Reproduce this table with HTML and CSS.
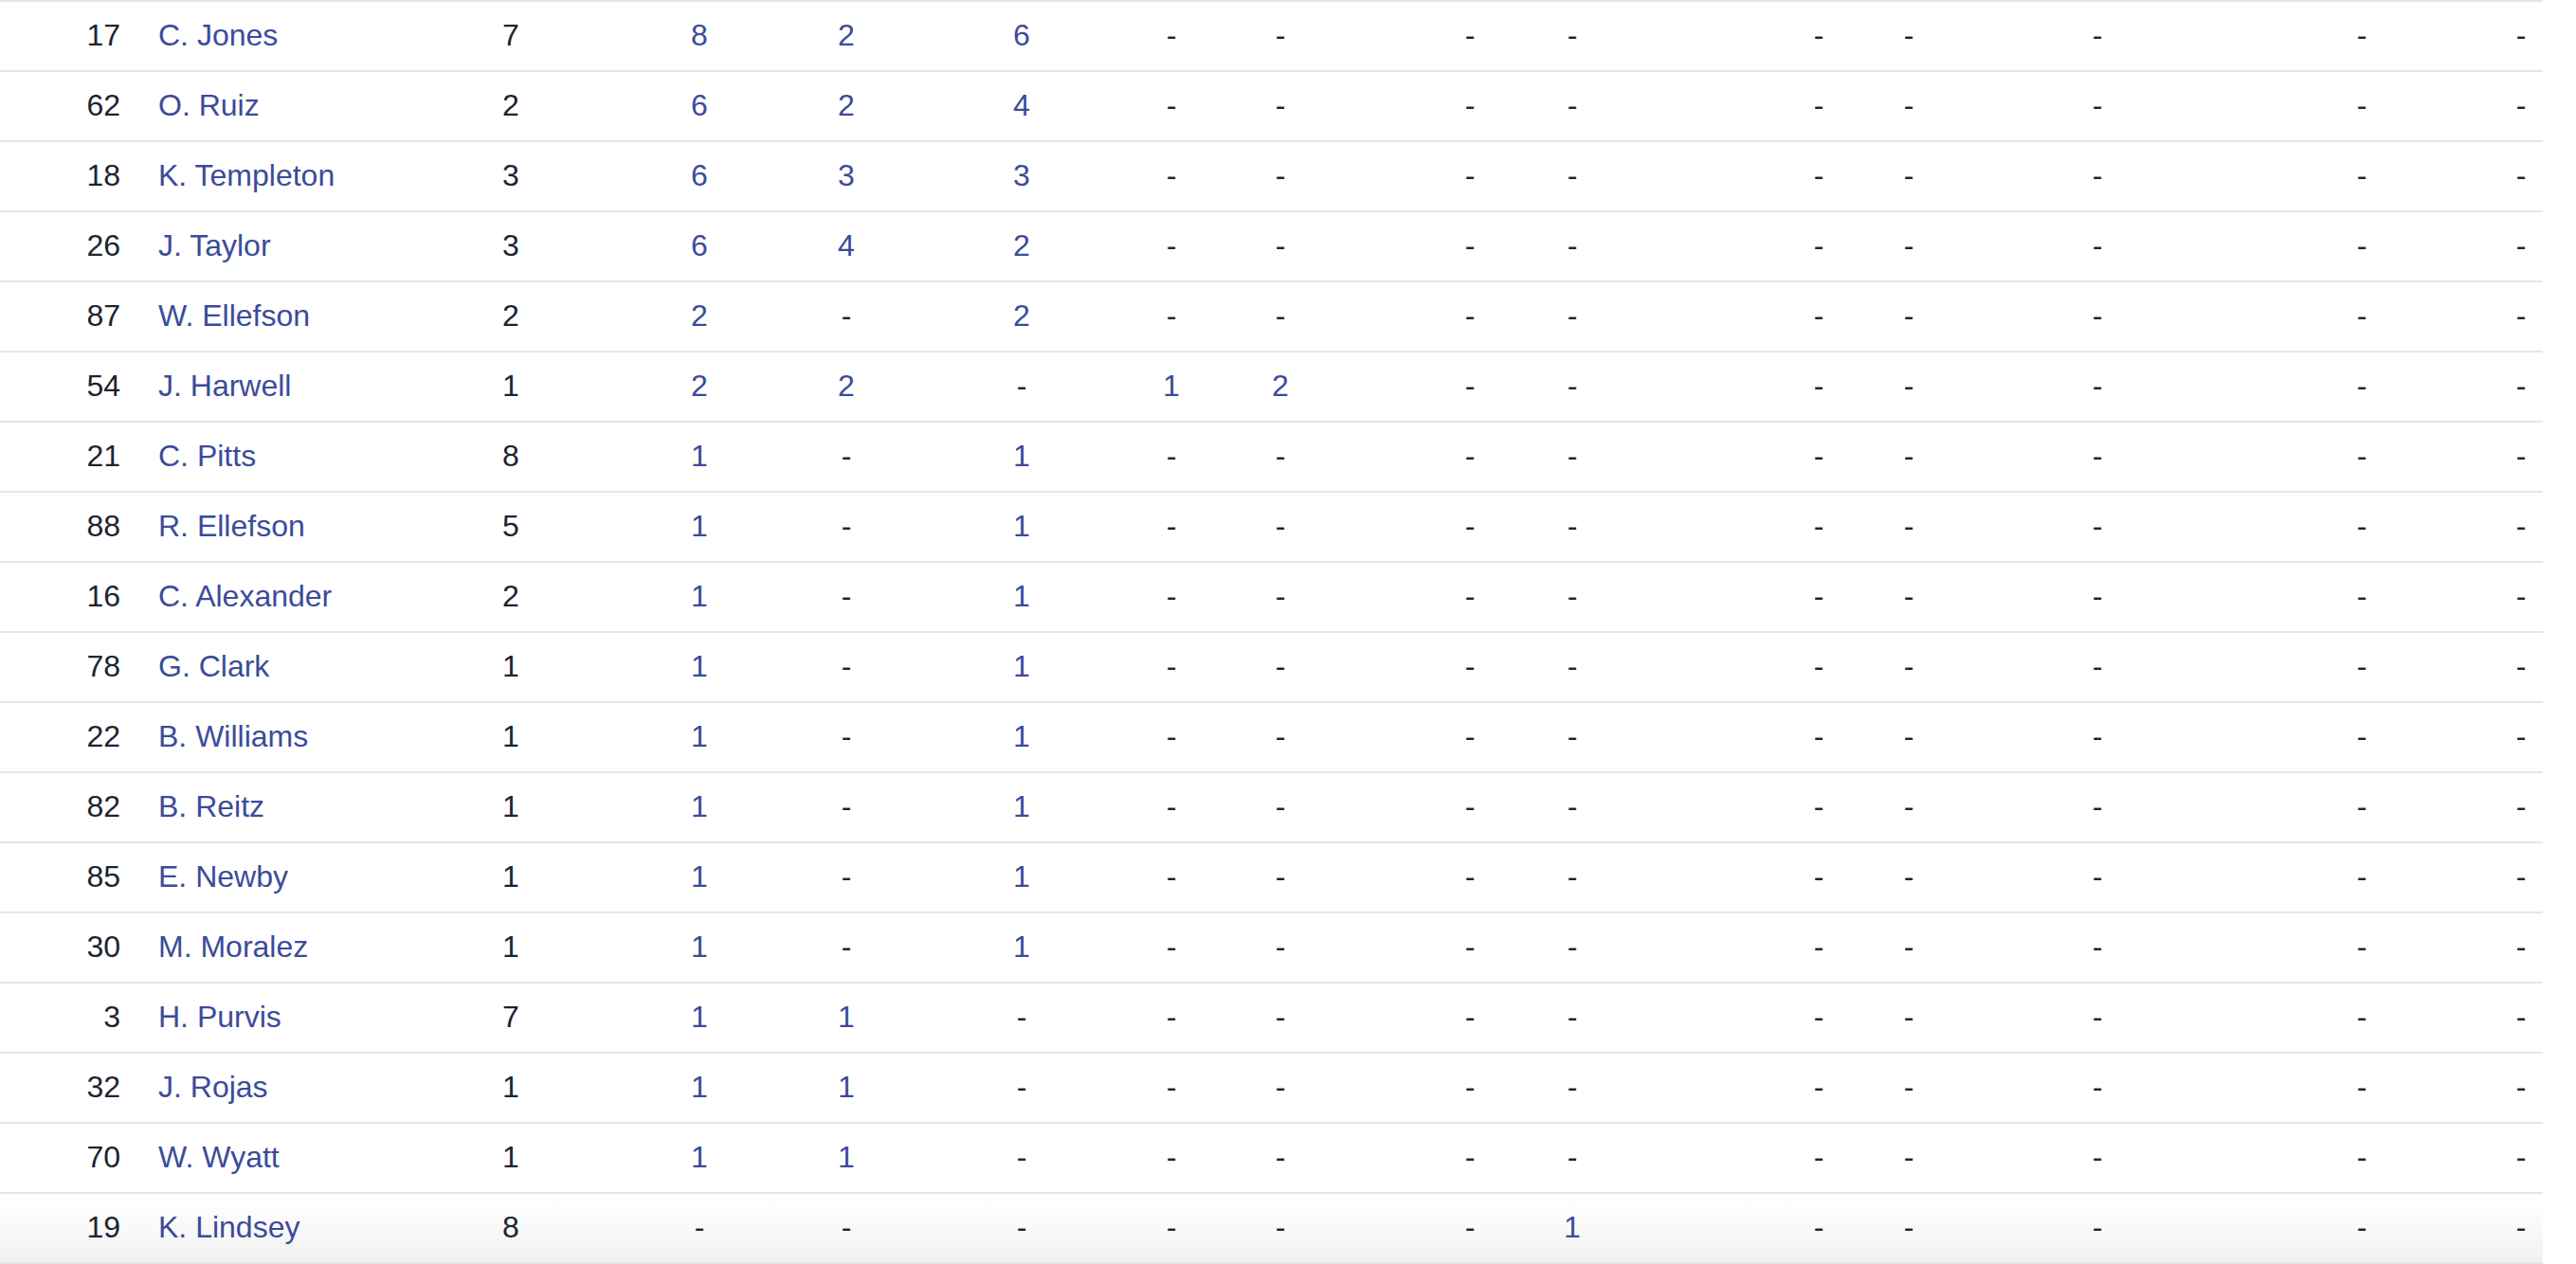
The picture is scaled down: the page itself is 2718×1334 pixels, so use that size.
FILE: index.html
```html
<!DOCTYPE html>
<html>
<head>
<meta charset="utf-8">
<link rel="stylesheet" href="styles.css">
</head>
<body>
<div class="table">
  <div class="row"><span class="num">17</span><a class="name">C. Jones</a><span class="v">7</span><a class="v lk">8</a><a class="v lk">2</a><a class="v lk">6</a><span class="v">-</span><span class="v">-</span><span class="v">-</span><span class="v">-</span><span class="v">-</span><span class="v">-</span><span class="v">-</span><span class="v">-</span><span class="v">-</span></div>
  <div class="row"><span class="num">62</span><a class="name">O. Ruiz</a><span class="v">2</span><a class="v lk">6</a><a class="v lk">2</a><a class="v lk">4</a><span class="v">-</span><span class="v">-</span><span class="v">-</span><span class="v">-</span><span class="v">-</span><span class="v">-</span><span class="v">-</span><span class="v">-</span><span class="v">-</span></div>
  <div class="row"><span class="num">18</span><a class="name">K. Templeton</a><span class="v">3</span><a class="v lk">6</a><a class="v lk">3</a><a class="v lk">3</a><span class="v">-</span><span class="v">-</span><span class="v">-</span><span class="v">-</span><span class="v">-</span><span class="v">-</span><span class="v">-</span><span class="v">-</span><span class="v">-</span></div>
  <div class="row"><span class="num">26</span><a class="name">J. Taylor</a><span class="v">3</span><a class="v lk">6</a><a class="v lk">4</a><a class="v lk">2</a><span class="v">-</span><span class="v">-</span><span class="v">-</span><span class="v">-</span><span class="v">-</span><span class="v">-</span><span class="v">-</span><span class="v">-</span><span class="v">-</span></div>
  <div class="row"><span class="num">87</span><a class="name">W. Ellefson</a><span class="v">2</span><a class="v lk">2</a><span class="v">-</span><a class="v lk">2</a><span class="v">-</span><span class="v">-</span><span class="v">-</span><span class="v">-</span><span class="v">-</span><span class="v">-</span><span class="v">-</span><span class="v">-</span><span class="v">-</span></div>
  <div class="row"><span class="num">54</span><a class="name">J. Harwell</a><span class="v">1</span><a class="v lk">2</a><a class="v lk">2</a><span class="v">-</span><a class="v lk">1</a><a class="v lk">2</a><span class="v">-</span><span class="v">-</span><span class="v">-</span><span class="v">-</span><span class="v">-</span><span class="v">-</span><span class="v">-</span></div>
  <div class="row"><span class="num">21</span><a class="name">C. Pitts</a><span class="v">8</span><a class="v lk">1</a><span class="v">-</span><a class="v lk">1</a><span class="v">-</span><span class="v">-</span><span class="v">-</span><span class="v">-</span><span class="v">-</span><span class="v">-</span><span class="v">-</span><span class="v">-</span><span class="v">-</span></div>
  <div class="row"><span class="num">88</span><a class="name">R. Ellefson</a><span class="v">5</span><a class="v lk">1</a><span class="v">-</span><a class="v lk">1</a><span class="v">-</span><span class="v">-</span><span class="v">-</span><span class="v">-</span><span class="v">-</span><span class="v">-</span><span class="v">-</span><span class="v">-</span><span class="v">-</span></div>
  <div class="row"><span class="num">16</span><a class="name">C. Alexander</a><span class="v">2</span><a class="v lk">1</a><span class="v">-</span><a class="v lk">1</a><span class="v">-</span><span class="v">-</span><span class="v">-</span><span class="v">-</span><span class="v">-</span><span class="v">-</span><span class="v">-</span><span class="v">-</span><span class="v">-</span></div>
  <div class="row"><span class="num">78</span><a class="name">G. Clark</a><span class="v">1</span><a class="v lk">1</a><span class="v">-</span><a class="v lk">1</a><span class="v">-</span><span class="v">-</span><span class="v">-</span><span class="v">-</span><span class="v">-</span><span class="v">-</span><span class="v">-</span><span class="v">-</span><span class="v">-</span></div>
  <div class="row"><span class="num">22</span><a class="name">B. Williams</a><span class="v">1</span><a class="v lk">1</a><span class="v">-</span><a class="v lk">1</a><span class="v">-</span><span class="v">-</span><span class="v">-</span><span class="v">-</span><span class="v">-</span><span class="v">-</span><span class="v">-</span><span class="v">-</span><span class="v">-</span></div>
  <div class="row"><span class="num">82</span><a class="name">B. Reitz</a><span class="v">1</span><a class="v lk">1</a><span class="v">-</span><a class="v lk">1</a><span class="v">-</span><span class="v">-</span><span class="v">-</span><span class="v">-</span><span class="v">-</span><span class="v">-</span><span class="v">-</span><span class="v">-</span><span class="v">-</span></div>
  <div class="row"><span class="num">85</span><a class="name">E. Newby</a><span class="v">1</span><a class="v lk">1</a><span class="v">-</span><a class="v lk">1</a><span class="v">-</span><span class="v">-</span><span class="v">-</span><span class="v">-</span><span class="v">-</span><span class="v">-</span><span class="v">-</span><span class="v">-</span><span class="v">-</span></div>
  <div class="row"><span class="num">30</span><a class="name">M. Moralez</a><span class="v">1</span><a class="v lk">1</a><span class="v">-</span><a class="v lk">1</a><span class="v">-</span><span class="v">-</span><span class="v">-</span><span class="v">-</span><span class="v">-</span><span class="v">-</span><span class="v">-</span><span class="v">-</span><span class="v">-</span></div>
  <div class="row"><span class="num">3</span><a class="name">H. Purvis</a><span class="v">7</span><a class="v lk">1</a><a class="v lk">1</a><span class="v">-</span><span class="v">-</span><span class="v">-</span><span class="v">-</span><span class="v">-</span><span class="v">-</span><span class="v">-</span><span class="v">-</span><span class="v">-</span><span class="v">-</span></div>
  <div class="row"><span class="num">32</span><a class="name">J. Rojas</a><span class="v">1</span><a class="v lk">1</a><a class="v lk">1</a><span class="v">-</span><span class="v">-</span><span class="v">-</span><span class="v">-</span><span class="v">-</span><span class="v">-</span><span class="v">-</span><span class="v">-</span><span class="v">-</span><span class="v">-</span></div>
  <div class="row"><span class="num">70</span><a class="name">W. Wyatt</a><span class="v">1</span><a class="v lk">1</a><a class="v lk">1</a><span class="v">-</span><span class="v">-</span><span class="v">-</span><span class="v">-</span><span class="v">-</span><span class="v">-</span><span class="v">-</span><span class="v">-</span><span class="v">-</span><span class="v">-</span></div>
  <div class="row last"><span class="num">19</span><a class="name">K. Lindsey</a><span class="v">8</span><span class="v">-</span><span class="v">-</span><span class="v">-</span><span class="v">-</span><span class="v">-</span><span class="v">-</span><a class="v lk">1</a><span class="v">-</span><span class="v">-</span><span class="v">-</span><span class="v">-</span><span class="v">-</span></div>
</div>
</body>
</html>
```
FILE: styles.css
```css
html, body {
  margin: 0;
  padding: 0;
  background: #ffffff;
}

body {
  font-family: "Liberation Sans", Arial, Helvetica, sans-serif;
  font-size: 32px;
  color: #1c2431;
  overflow: hidden;
}

.table {
  width: 2683px;
  border-bottom: 2px solid #e6e6e6;
}

.row {
  display: grid;
  grid-template-columns: 140px 387px 199px 155px 185px 158px 115px 200px 108px 260px 95px 199px 279px 168px 35px;
  align-items: center;
  box-sizing: content-box;
  height: 71px;
  padding-bottom: 1px;
  border-top: 2px solid #e6e6e6;
}

.row.last {
  background: linear-gradient(#ffffff 10%, #f1f1f1);
}

.num {
  text-align: right;
  padding-right: 13px;
}

.name {
  padding-left: 27px;
  color: #3b4b9b;
  text-decoration: none;
}

.v {
  justify-self: start;
  width: 20px;
  margin-left: 2px;
  text-align: center;
  color: #1c2431;
  text-decoration: none;
}

.v.lk {
  color: #3b4b9b;
}
```
